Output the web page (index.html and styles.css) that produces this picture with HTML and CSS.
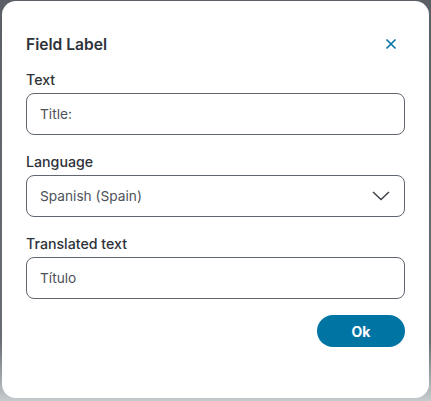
FILE: index.html
```html
<!DOCTYPE html>
<html>
<head>
<meta charset="utf-8">
<link rel="stylesheet" href="styles.css">
</head>
<body>
<div class="dialog">
  <div class="header">
    <h1 class="title">Field Label</h1>
    <button class="close" aria-label="Close">
      <svg width="12" height="12" viewBox="0 0 12 12"><path d="M1.5 1.5L10.5 10.5M10.5 1.5L1.5 10.5" stroke="#0b77a7" stroke-width="1.7" fill="none"/></svg>
    </button>
  </div>
  <div class="field">
    <label class="label">Text</label>
    <div class="input">Title:</div>
  </div>
  <div class="field">
    <label class="label">Language</label>
    <div class="input select">
      <span>Spanish (Spain)</span>
      <svg width="18" height="10" viewBox="0 0 18 10"><path d="M1 1L9 8.5L17 1" stroke="#3a3f46" stroke-width="1.4" fill="none"/></svg>
    </div>
  </div>
  <div class="field">
    <label class="label">Translated text</label>
    <div class="input">Título</div>
  </div>
  <div class="actions">
    <button class="ok">Ok</button>
  </div>
</div>
</body>
</html>
```
FILE: styles.css
```css
* { box-sizing: border-box; }
html, body { margin: 0; height: 100%; }
body {
  background: linear-gradient(#5c6066, #6a6e74 85%, #c5cacd);
  font-family: Inter, "Noto Sans", sans-serif;
  padding: 1px 2px 3px 2px;
}
.dialog {
  background: #fff;
  border-radius: 14px;
  height: 397px;
  padding: 26px 24px 0 24px;
  display: flex;
  flex-direction: column;
}
.header {
  display: flex;
  justify-content: space-between;
  align-items: center;
  height: 34px;
  margin-bottom: 10px;
}
.title {
  margin: 0;
  font-size: 15.6px;
  font-weight: 600;
  color: #2e3239;
}
.close {
  border: 0;
  background: none;
  padding: 0;
  width: 14px;
  height: 14px;
  display: flex;
  align-items: center;
  justify-content: center;
  margin-right: 7px;
}
.field {
  display: flex;
  flex-direction: column;
  margin-bottom: 18px;
}
.label {
  font-size: 14.2px;
  font-weight: 500;
  color: #2e3239;
  line-height: 17px;
  margin-bottom: 5px;
}
.input {
  height: 42px;
  border: 1px solid #60666e;
  border-radius: 8px;
  padding: 0 13px;
  display: flex;
  align-items: center;
  font-size: 13.7px;
  color: #4d525a;
}
.select {
  justify-content: space-between;
  padding-right: 14px;
}
.actions {
  display: flex;
  justify-content: flex-end;
  margin-top: -2px;
}
.ok {
  width: 88px;
  height: 32px;
  border: 0;
  border-radius: 16px;
  background: #0074a3;
  color: #fff;
  font-family: Inter, sans-serif;
  font-size: 14px;
  font-weight: 700;
}
```
